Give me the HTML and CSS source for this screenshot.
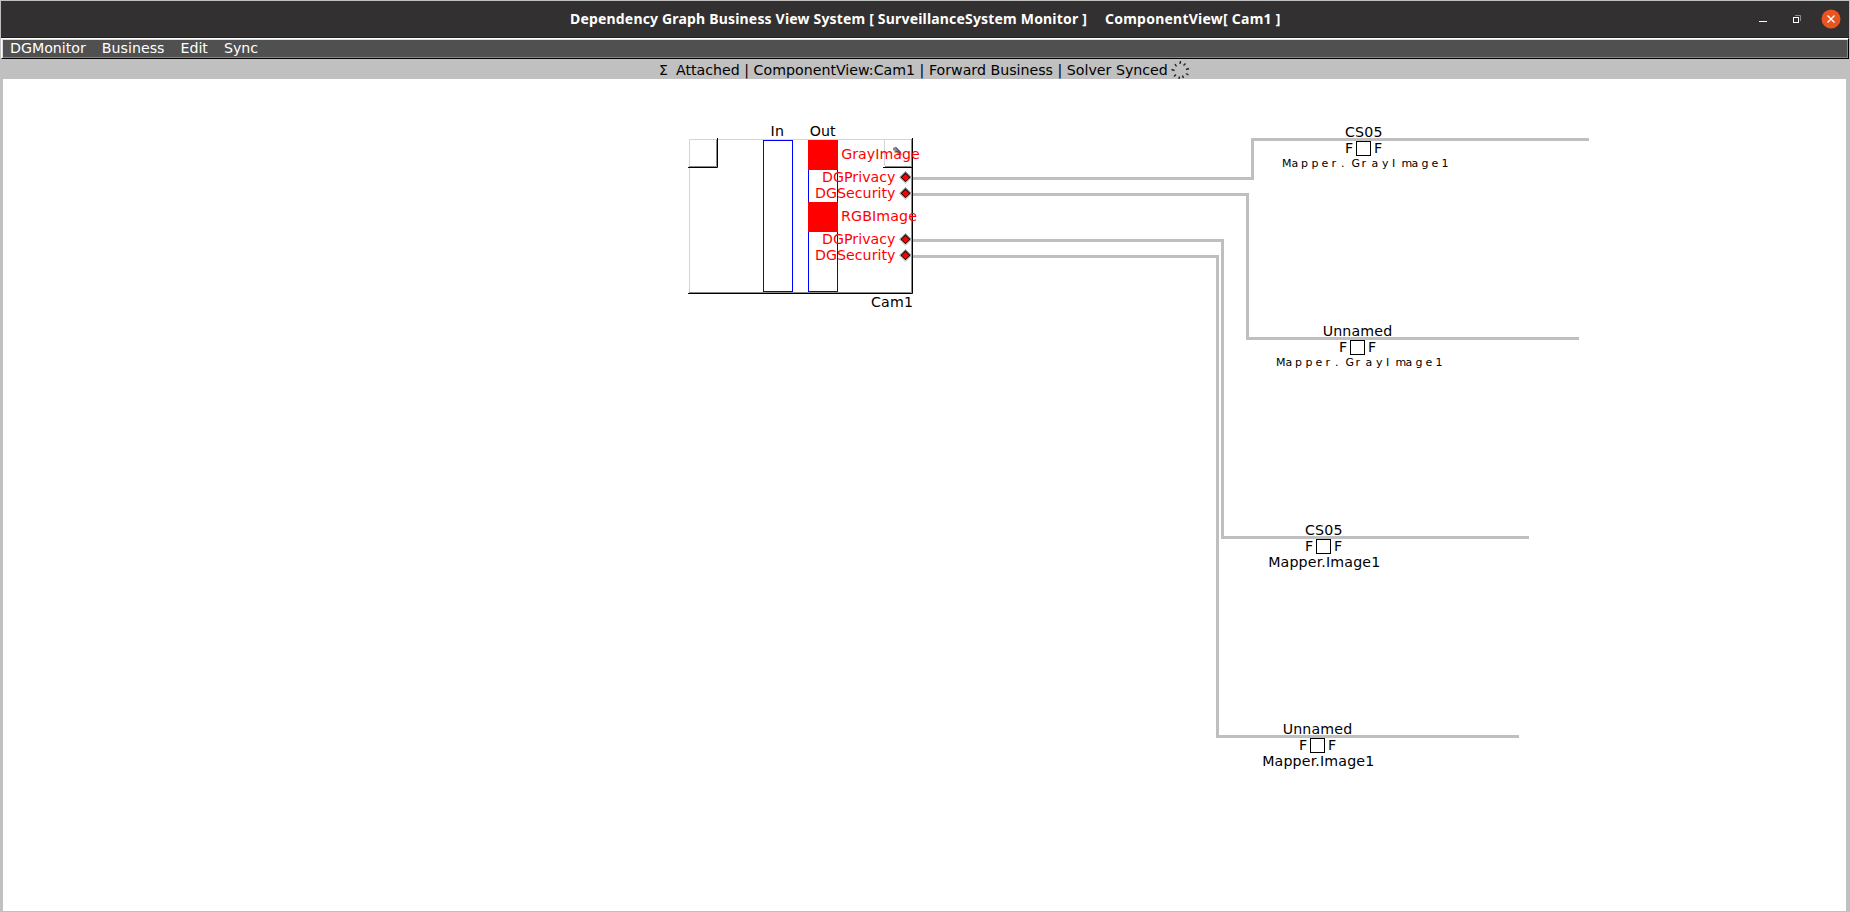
FILE: index.html
```
<!DOCTYPE html>
<html lang="en">
<head>
<meta charset="utf-8">
<title>Dependency Graph Business View System</title>
<link rel="stylesheet" href="styles.css">
</head>
<body>
<div class="window">
  <header class="titlebar">
    <h1 class="title"><span class="title-app">Dependency Graph Business View System [ SurveillanceSystem Monitor ]</span><span class="title-view">ComponentView[ Cam1 ]</span></h1>
    <svg class="controls" width="90" height="36" viewBox="1755 1 90 36">
      <rect x="1759" y="21" width="8" height="1" fill="#fff"/>
      <path d="M1795 15.5H1800.5V21" fill="none" stroke="#8c8b8b"/>
      <rect x="1793.5" y="17.5" width="5" height="5" fill="none" stroke="#fff"/>
      <circle cx="1831" cy="19" r="9.5" fill="#e95420"/>
      <path d="M1827.5 15.5L1834.5 22.5M1834.5 15.5L1827.5 22.5" stroke="#fff" stroke-width="1.4"/>
    </svg>
  </header>
  <nav class="menubar">
    <span>DGMonitor</span><span>Business</span><span>Edit</span><span>Sync</span>
  </nav>
  <div class="status">
    <span class="sigma">Σ</span>
    <span class="status-text">Attached | ComponentView:Cam1 | Forward Business | Solver Synced</span>
    <svg class="spinner" width="20" height="20" viewBox="0 0 20 20">
      <path d="M10.500 2L10 5M15.500 4.500L13.500 6.500M19 9.500L16 10.500M18.500 16L16 14.500M13.500 19L12.500 16.500M9 20L9.500 17.500M4 17.500L6 15.500M1.500 10.500L4.500 11.500M5 5L6.500 7.500"/>
    </svg>
  </div>
  <main class="canvas">
    <svg class="graph" width="1843" height="832" viewBox="3 79 1843 832">
      <defs>
        <g id="port">
          <path d="M-6.500 0L0 -6.500L6.500 0Z" fill="#929292"/>
          <path d="M-6.500 0L0 6.500L6.500 0Z" fill="#c0c0c0"/>
          <path d="M-5.500 0L0 5.500L5.500 0Z" fill="#fff"/>
          <path d="M-5 0L0 -5L5 0L0 4.800Z" fill="#000"/>
          <path d="M-3.800 0L0 -3.800L3.800 0L0 3.800Z" fill="#f00"/>
        </g>
      </defs>

      <g class="wires">
        <path d="M913 178.500H1252.500V139.500H1589"/>
        <path d="M913 194.500H1247.500V338.500H1579"/>
        <path d="M913 240.500H1222.500V537.500H1529"/>
        <path d="M913 256.500H1217.500V736.500H1519"/>
      </g>

      <g class="bevel">
        <path class="light" d="M689.500 292V139.500H911M884.500 140V166"/>
        <path class="mid" d="M716.500 140V166.500H689M911.500 139V292.500H689M885 166.500H911"/>
        <path class="dark" d="M717.500 138V167.500H688M912.500 138V293.500H688M883 167.500H913"/>
      </g>

      <g class="pencil">
        <path d="M893 148L896 146.500L901 151.500L902 155.500L898 154.500L893 150Z" fill="#8a8a8a"/>
        <path d="M896 148L901 153" stroke="#3c5668"/>
        <path d="M894 150L898 154" stroke="#b8b8b8"/>
      </g>

      <g class="columns">
        <rect x="763.500" y="140.500" width="29" height="151"/>
        <rect x="808.500" y="140.500" width="29" height="151"/>
      </g>
      <rect x="808" y="140" width="30" height="30" fill="#f00"/>
      <rect x="808" y="202" width="30" height="30" fill="#f00"/>

      <g class="label">
        <text x="770.500" y="136" textLength="13.500">In</text>
        <text x="809.700" y="136" textLength="26">Out</text>
        <text x="871" y="307" textLength="42">Cam1</text>
      </g>
      <g class="label output">
        <text x="841.200" y="159" textLength="78.500">GrayImage</text>
        <text x="822" y="182" textLength="73.500">DGPrivacy</text>
        <text x="815" y="198" textLength="80.500">DGSecurity</text>
        <text x="841" y="221" textLength="76">RGBImage</text>
        <text x="822" y="244" textLength="73.500">DGPrivacy</text>
        <text x="815" y="260" textLength="80.500">DGSecurity</text>
      </g>
      <use href="#port" x="905.500" y="177.500"/>
      <use href="#port" x="905.500" y="193.500"/>
      <use href="#port" x="905.500" y="239.500"/>
      <use href="#port" x="905.500" y="255.500"/>

      <g class="label">
        <text x="1345" y="137" textLength="37.500">CS05</text>
        <text x="1345" y="153">F</text><text x="1374" y="153">F</text>
        <rect x="1356.500" y="141.500" width="14" height="14"/>
        <text class="spaced" y="167" x="1282 1291.500 1301 1311.500 1321.500 1331.500 1341 1351.500 1361.500 1371.500 1382 1392 1401.500 1411.500 1421.500 1431.500 1441.500">Mapper.GrayImage1</text>
      </g>
      <g class="label">
        <text x="1322.700" y="336" textLength="69.500">Unnamed</text>
        <text x="1339" y="352">F</text><text x="1368" y="352">F</text>
        <rect x="1350.500" y="340.500" width="14" height="14"/>
        <text class="spaced" y="366" x="1276 1285.500 1295 1305.500 1315.500 1325.500 1335 1345.500 1355.500 1365.500 1376 1386 1395.500 1405.500 1415.500 1425.500 1435.500">Mapper.GrayImage1</text>
      </g>
      <g class="label">
        <text x="1305" y="535" textLength="37.500">CS05</text>
        <text x="1305" y="551">F</text><text x="1334" y="551">F</text>
        <rect x="1316.500" y="539.500" width="14" height="14"/>
        <text x="1268.200" y="567" textLength="112">Mapper.Image1</text>
      </g>
      <g class="label">
        <text x="1282.700" y="734" textLength="69.500">Unnamed</text>
        <text x="1299" y="750">F</text><text x="1328" y="750">F</text>
        <rect x="1310.500" y="738.500" width="14" height="14"/>
        <text x="1262.200" y="766" textLength="112">Mapper.Image1</text>
      </g>
    </svg>
  </main>
</div>
</body>
</html>
```
FILE: styles.css
```
* { box-sizing: border-box; }
body { margin: 0; background: #c0c0c0; font-family: "DejaVu Sans", sans-serif; font-size: 14.2px; color: #000; }
.window { width: 1850px; height: 912px; padding: 1px 0 1px 1px; overflow: hidden; display: flex; flex-direction: column; }
.titlebar { width: 1848px; height: 37px; background: #323030; border-bottom: 1px solid #201f1f; display: flex; }
.title { margin: 0; flex: 1; padding-left: 569px; display: flex; gap: 17px; font: bold 14px/36px "Noto Sans", sans-serif; color: #fff; white-space: nowrap; }
.title-app { width: 518px; letter-spacing: 0.18px; }
.title-view { letter-spacing: 0.24px; }
.controls { flex: none; margin-right: 4px; }
.menubar { width: 1848px; height: 21px; background: #505050; border: 1px solid #000; border-top-color: #fff; border-left-color: #fff; box-shadow: inset 1px 1px #dcdcdc, inset -1px -1px #888; display: flex; gap: 16px; padding-left: 8px; color: #fff; line-height: 19px; }
.status { height: 20px; flex: none; padding-left: 658px; display: flex; line-height: 22px; white-space: pre; }
.sigma { width: 17px; font-size: 14px; }
.status-text { width: 494px; }
.spinner { fill: none; stroke: #222; stroke-width: 1.4; }
.canvas { margin-left: 2px; width: 1843px; height: 832px; flex: none; background: #fff; }
.graph { display: block; }
.wires { fill: none; stroke: #bfbfbf; stroke-width: 3; }
.bevel { fill: none; }
.light { stroke: #d4d4d4; }
.mid { stroke: #8a8a8a; }
.dark { stroke: #000; }
.columns { fill: none; stroke: #00f; }
.label { fill: #000; }
.label rect { fill: #fff; stroke: #000; }
.output { fill: #f00; }
.spaced { font-size: 11px; }
```
